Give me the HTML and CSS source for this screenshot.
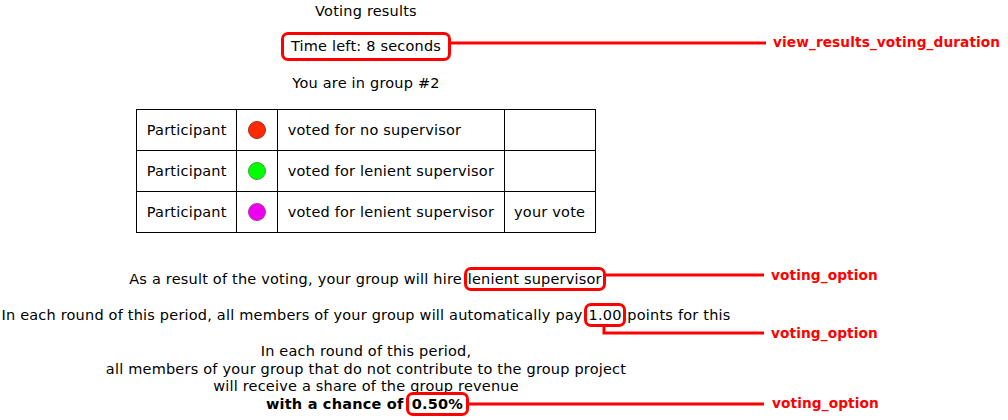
FILE: index.html
```html
<!DOCTYPE html>
<html>
<head>
<meta charset="utf-8">
<link rel="stylesheet" href="styles.css">
</head>
<body>
<div class="page">
  <div class="content">
    <div class="title">Voting results</div>
    <div class="timer-row"><span class="mark timer">Time left: 8 seconds</span></div>
    <div class="group">You are in group #2</div>
    <table class="votes">
      <tr><td>Participant</td><td class="dotcell"><span class="dot red"></span></td><td>voted for no supervisor</td><td></td></tr>
      <tr><td>Participant</td><td class="dotcell"><span class="dot green"></span></td><td>voted for lenient supervisor</td><td></td></tr>
      <tr><td>Participant</td><td class="dotcell"><span class="dot magenta"></span></td><td>voted for lenient supervisor</td><td>your vote</td></tr>
    </table>
    <p class="result">As a result of the voting, your group will hire <span class="mark opt">lenient supervisor</span></p>
    <p class="pay">In each round of this period, all members of your group will automatically pay <span class="mark opt">1.00</span> points for this</p>
    <p class="share">In each round of this period,<br>all members of your group that do not contribute to the group project<br>will receive a share of the group revenue<br><b>with a chance of <span class="mark opt wide">0.50%</span></b></p>
  </div>
  <svg class="notes" width="1008" height="420" viewBox="0 0 1008 420">
    <g stroke="#ff0000" stroke-width="3" fill="none">
      <line x1="449" y1="43" x2="766" y2="43"/>
      <line x1="603" y1="275" x2="764" y2="275"/>
      <polyline points="604,325 604,333 764,333"/>
      <line x1="468" y1="404" x2="764" y2="404"/>
    </g>
    <g class="label">
      <text x="773" y="47">view_results_voting_duration</text>
      <text x="771" y="280">voting_option</text>
      <text x="771" y="338">voting_option</text>
      <text x="772" y="408">voting_option</text>
    </g>
  </svg>
</div>
</body>
</html>
```
FILE: styles.css
```css
html, body {
  margin: 0;
  padding: 0;
  background: #ffffff;
}
body {
  font-family: "DejaVu Sans", Verdana, sans-serif;
  font-size: 14.5px;
  letter-spacing: 0.2px;
  color: #000;
}
.page {
  position: relative;
  width: 1008px;
  height: 420px;
  overflow: hidden;
}
.content {
  width: 732px;
  text-align: center;
  line-height: 17px;
}
.title {
  padding-top: 3px;
}
.timer-row {
  margin-top: 15px;
}
.mark {
  outline: 3px solid #ff0000;
  border-radius: 4px;
}
.timer {
  display: inline-block;
  padding: 3px 7px;
}
.group {
  margin-top: 17px;
}
.votes {
  margin: 17px auto 0;
  border-collapse: collapse;
}
.votes td {
  border: 1px solid #000;
  padding: 12px 9.5px;
  text-align: left;
  line-height: 16px;
}
.votes td.dotcell {
  padding: 10px 11px;
}
.dot {
  display: block;
  width: 16px;
  height: 16px;
  border-radius: 50%;
  border: 1px solid #7a2a2a;
}
.dot.red { background: #ff2a00; border-color: #a03020; }
.dot.green { background: #00ff00; border-color: #40a040; }
.dot.magenta { background: #ee00ee; border-color: #a040a0; }
.opt {
  padding: 1px 1px;
}
.opt.wide {
  padding: 1px 3px;
}
p {
  margin: 0;
}
.result {
  margin-top: 38px;
}
.pay {
  margin-top: 19px;
}
.share {
  margin-top: 19px;
  line-height: 17.7px;
}
.notes {
  position: absolute;
  left: 0;
  top: 0;
}
.label text {
  font-family: "DejaVu Sans", Verdana, sans-serif;
  font-weight: bold;
  font-size: 13.7px;
  letter-spacing: 0.1px;
  fill: #ff0000;
}
```
